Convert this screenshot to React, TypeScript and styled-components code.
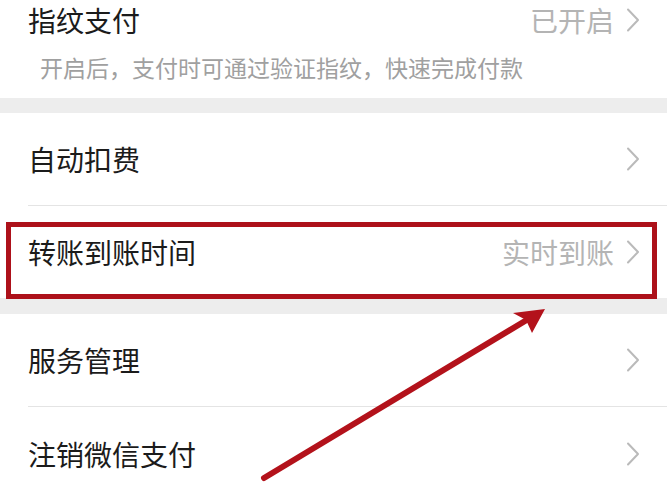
import React from "react";
import styled, { createGlobalStyle } from "styled-components";

const Global = createGlobalStyle`
  html, body { margin: 0; padding: 0; }
  body {
    width: 667px;
    height: 500px;
    overflow: hidden;
    background: #ededed;
    font-family: "Noto Sans CJK SC", "Noto Sans", sans-serif;
    -webkit-font-smoothing: antialiased;
  }
`;

const Page = styled.div`
  position: relative;
  width: 667px;
  height: 500px;
  overflow: hidden;
  background: #ededed;
  display: flex;
  flex-direction: column;
`;

const Group = styled.section<{ $gapTop?: number }>`
  background: #ffffff;
  margin-top: ${(p) => p.$gapTop ?? 0}px;
  display: flex;
  flex-direction: column;
`;

const Row = styled.div<{ $height: number }>`
  position: relative;
  height: ${(p) => p.$height}px;
  display: flex;
  align-items: center;
  padding: 0 27px 0 28px;
`;

const Title = styled.div`
  flex: 1;
  font-size: 28px;
  line-height: 1;
  color: #1b1b1b;
  letter-spacing: 0;
`;

const Value = styled.div`
  font-size: 28px;
  line-height: 1;
  color: #b4b4b4;
  margin-right: 12px;
`;

const Chevron = styled.svg`
  width: 14px;
  height: 24px;
  flex: none;
`;

const Hint = styled.div`
  padding: 12px 28px 16px 40px;
  font-size: 23px;
  line-height: 30px;
  color: #a0a0a0;
`;

const Divider = styled.div`
  height: 1px;
  margin-left: 28px;
  background: #e4e4e4;
`;

const Highlight = styled.div`
  position: absolute;
  left: 6px;
  right: 10px;
  top: 16px;
  bottom: -1px;
  border: 5px solid #ad111a;
  pointer-events: none;
`;

const ArrowLayer = styled.svg`
  position: absolute;
  left: 0;
  top: 0;
  width: 667px;
  height: 500px;
  pointer-events: none;
`;

const Arrow = () => (
  <Chevron viewBox="0 0 14 24">
    <path d="M2 1.5 L12 12 L2 22.5" fill="none" stroke="#bababa" strokeWidth="2" strokeLinecap="round" strokeLinejoin="round" />
  </Chevron>
);

type ItemProps = { title: string; value?: string; height: number; highlight?: boolean };

const Item = ({ title, value, height, highlight }: ItemProps) => (
  <Row $height={height}>
    <Title>{title}</Title>
    {value && <Value>{value}</Value>}
    <Arrow />
    {highlight && <Highlight />}
  </Row>
);

export default function App() {
  return (
    <>
      <Global />
      <Page>
        <Group>
          <Item title="指纹支付" value="已开启" height={40} />
          <Hint>开启后，支付时可通过验证指纹，快速完成付款</Hint>
        </Group>
        <Group $gapTop={15}>
          <Item title="自动扣费" height={92} />
          <Divider />
          <Item title="转账到账时间" value="实时到账" height={92} highlight />
        </Group>
        <Group $gapTop={16}>
          <Item title="服务管理" height={92} />
          <Divider />
          <Item title="注销微信支付" height={93} />
        </Group>
        <ArrowLayer viewBox="0 0 667 500">
          <line x1="264" y1="478" x2="530" y2="318" stroke="#b3121b" strokeWidth="6" strokeLinecap="round" />
          <polygon points="545,309 513,313 526,320 532,333" fill="#b3121b" />
        </ArrowLayer>
      </Page>
    </>
  );
}
